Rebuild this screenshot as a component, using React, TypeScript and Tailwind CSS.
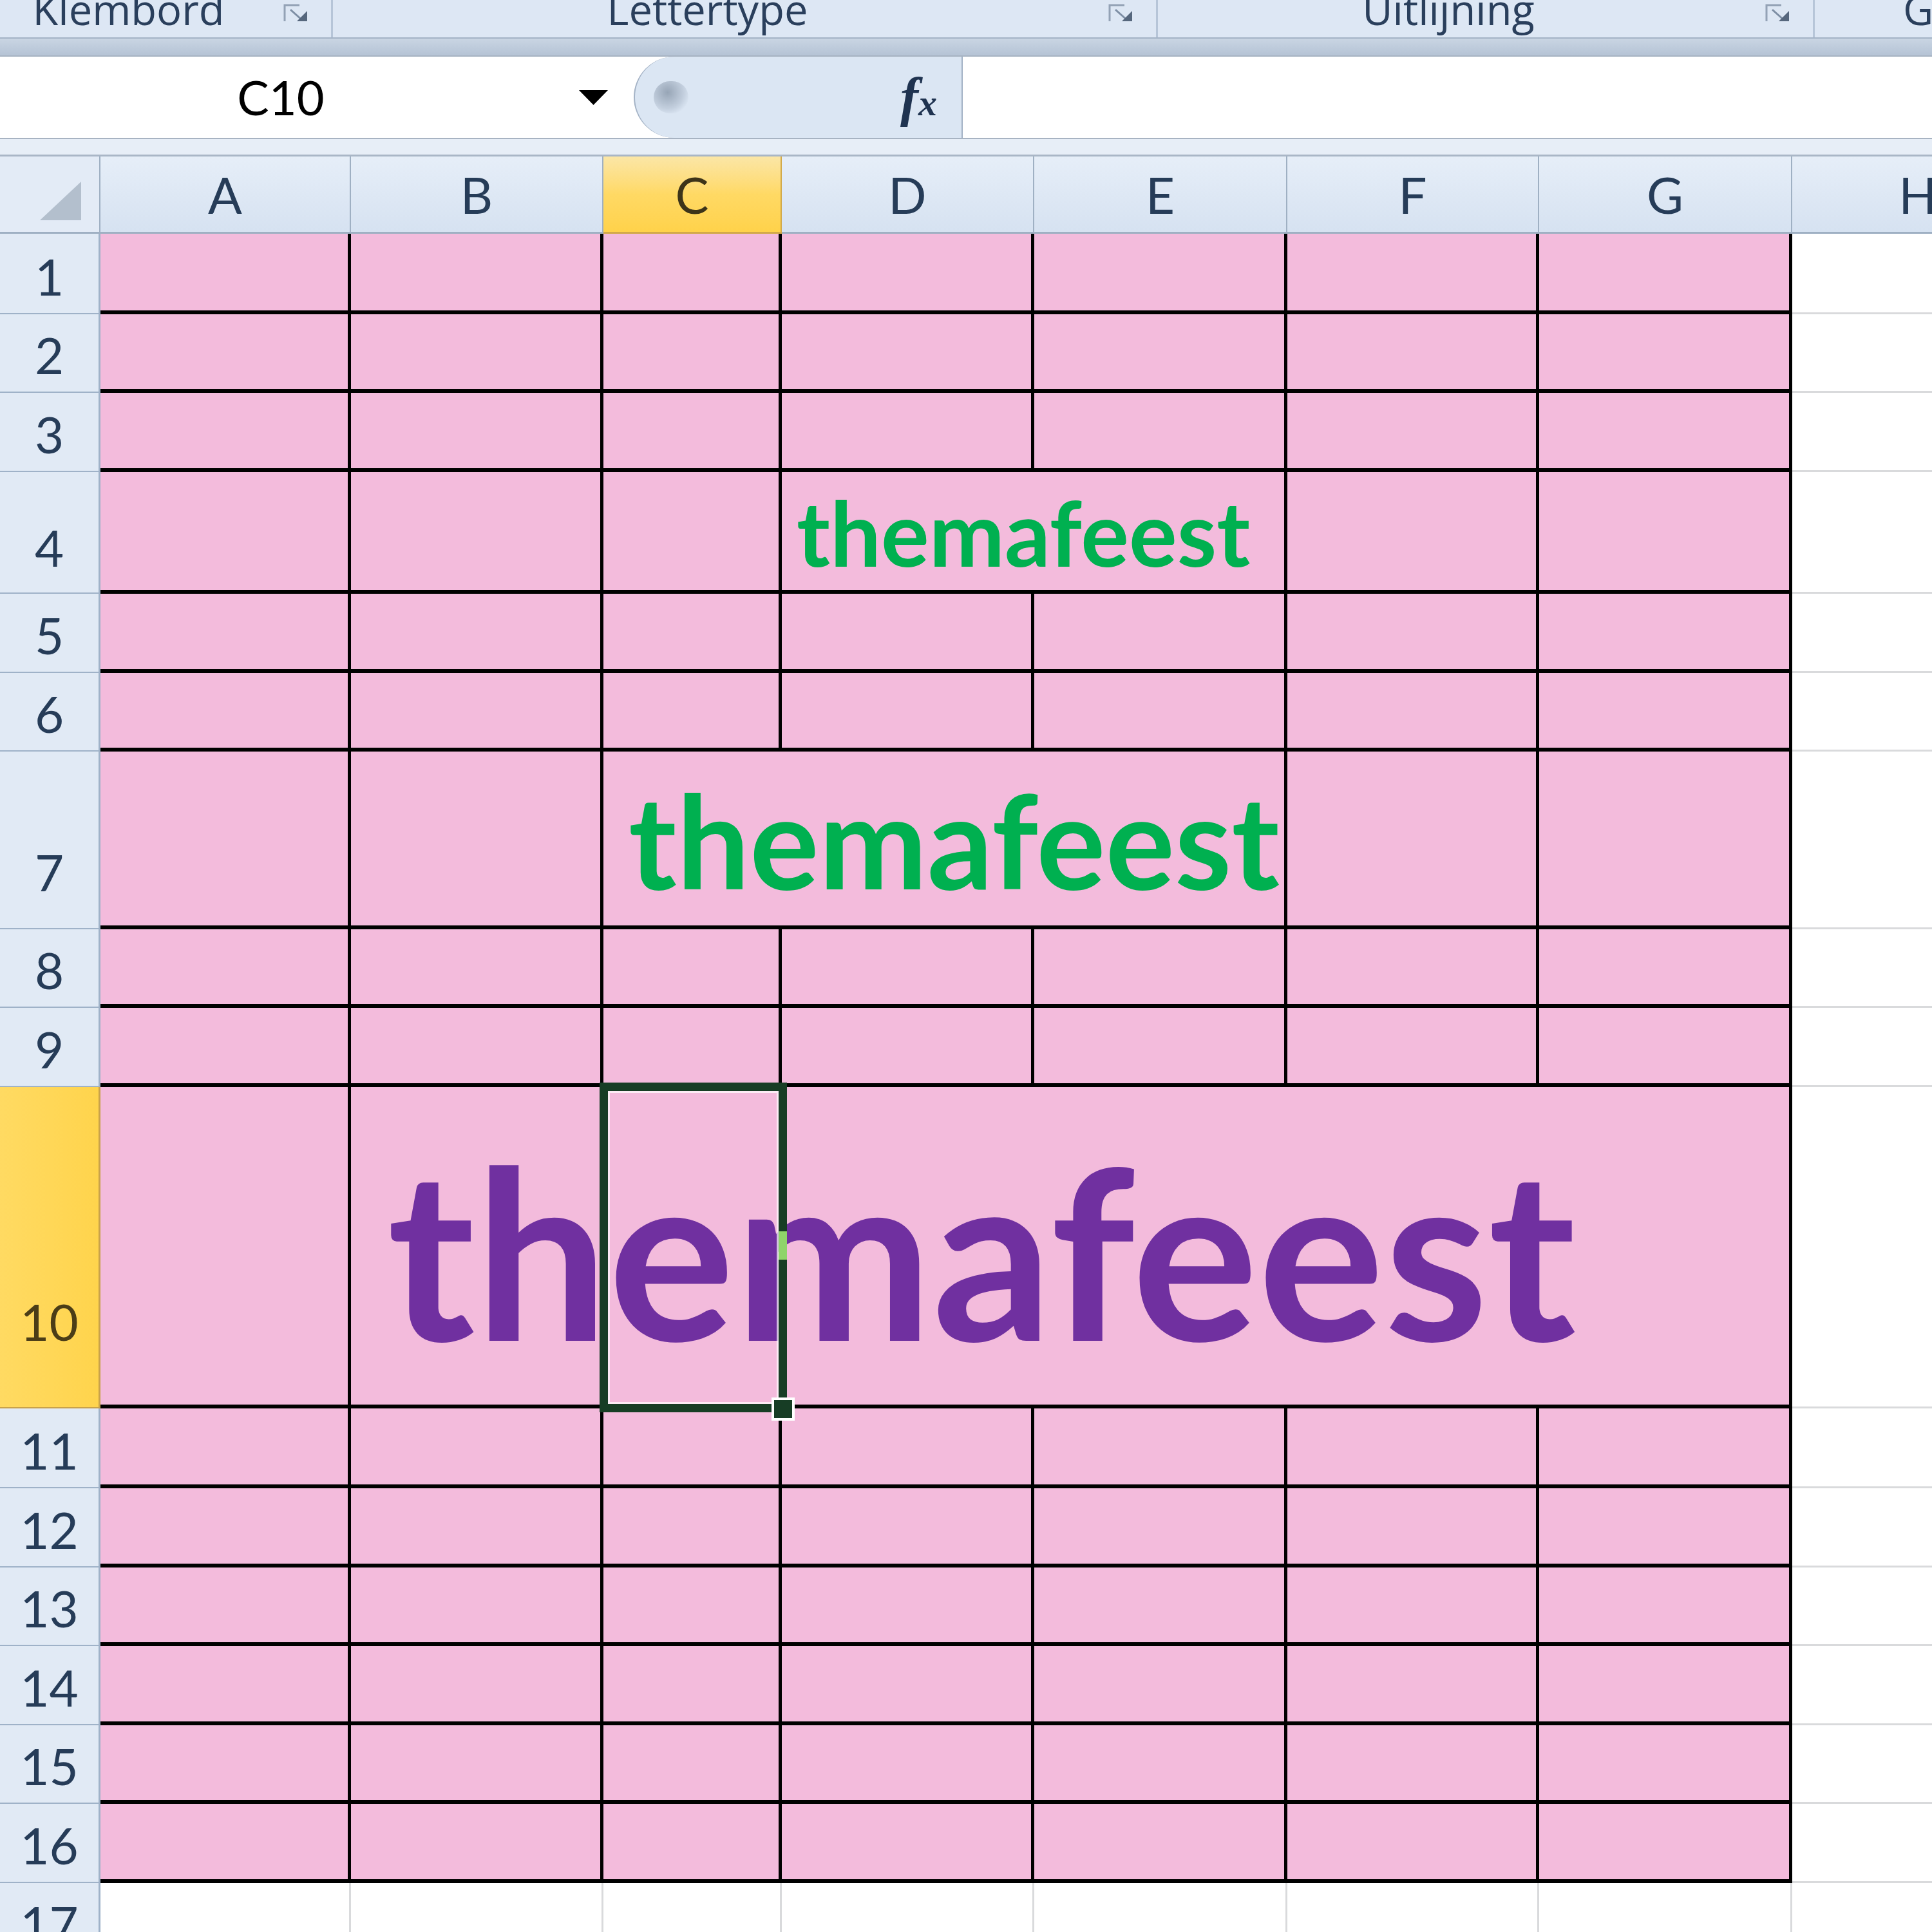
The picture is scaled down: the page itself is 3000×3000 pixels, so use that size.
import React from "react";

type Seg = { span: number; text?: "sm" | "md" | "lg" };

const COLS = ["A", "B", "C", "D", "E", "F", "G", "H"];

const SPAN: Record<number, string> = { 1: "", 2: "col-span-2", 3: "col-span-3", 6: "col-span-6" };

const LABEL_PAD: Record<number, string> = { 4: "pb-[31px]", 7: "pb-[48px]", 10: "pb-[94px]" };

const seven: Seg[] = Array.from({ length: 7 }, () => ({ span: 1 }));

function rowSegs(n: number): Seg[] {
  if (n === 4) return [{ span: 1 }, { span: 1 }, { span: 1 }, { span: 2, text: "sm" }, { span: 1 }, { span: 1 }];
  if (n === 7) return [{ span: 1 }, { span: 1 }, { span: 3, text: "md" }, { span: 1 }, { span: 1 }];
  if (n === 10) return [{ span: 1 }, { span: 6, text: "lg" }];
  return seven;
}

function Launcher() {
  return (
    <svg width="41" height="30" viewBox="0 0 41 30">
      <path d="M3 28 V3 H26" fill="none" stroke="#93a2b5" strokeWidth="3" />
      <path d="M12 10 L30 26" stroke="#7d8ea4" strokeWidth="3" />
      <polygon points="22,28 38,28 38,12" fill="#56677d" />
    </svg>
  );
}

function RibbonGroup({ label, w, last }: { label: string; w: string; last?: boolean }) {
  return (
    <div className={`${w} shrink-0 flex items-end border-r-[3px] border-[#b6c5d8]`}>
      {last ? (
        <div className="pl-[137px] pb-[12px] leading-[64px] whitespace-nowrap">{label}</div>
      ) : (
        <>
          <div className="flex-1 text-center pb-[12px] leading-[64px] whitespace-nowrap">{label}</div>
          <div className="w-[115px] shrink-0 pl-[40px] pb-[23px] flex">
            <Launcher />
          </div>
        </>
      )}
    </div>
  );
}

function CellText({ kind }: { kind: "sm" | "md" | "lg" }) {
  if (kind === "sm")
    return <span className="text-[140px] text-[#00b050] pl-[23px] pb-[20px]">themafeest</span>;
  if (kind === "md")
    return <span className="text-[201px] text-[#00b050] pl-[39px] pb-[33px]">themafeest</span>;
  return <span className="text-[367px] text-[#7030a0] pl-[56px] pb-[57px]">themafeest</span>;
}

export default function App() {
  const rows = Array.from({ length: 17 }, (_, i) => i + 1);

  return (
    <div className="w-[3000px] h-[3000px] overflow-hidden bg-white flex flex-col font-['Lato',sans-serif]">
      {/* ribbon group labels */}
      <div className="h-[86px] flex flex-col shrink-0">
        <div className="h-[58px] flex bg-[#dde7f4] text-[65px] text-[#2a3f5c] font-['Open_Sans',sans-serif]">
          <RibbonGroup label="Klembord" w="w-[517px]" />
          <RibbonGroup label="Lettertype" w="w-[1281px]" />
          <RibbonGroup label="Uitlijning" w="w-[1020px]" />
          <RibbonGroup label="Getal" w="w-[400px]" last />
        </div>
        <div className="h-[28px] bg-gradient-to-b from-[#c9d5e3] to-[#b5c3d5] border-t-2 border-[#a4b3c6]" />
      </div>

      {/* formula bar */}
      <div className="h-[130px] shrink-0 flex border-y-2 border-[#a7b3c2] bg-white">
        <div className="w-[984px] shrink-0 flex items-center">
          <div className="w-[872px] text-center text-[74px] leading-none text-black">C10</div>
          <svg width="45" height="23" viewBox="0 0 45 23" className="ml-[27px]">
            <polygon points="0,0 45,0 22.5,23" fill="#000" />
          </svg>
        </div>
        <div className="w-[511px] shrink-0 flex items-center bg-[#dbe6f3] rounded-l-[64px] border-l-2 border-r-2 border-[#a3b2c5]">
          <div className="ml-[29px] w-[54px] h-[50px] rounded-full bg-[radial-gradient(circle_at_40%_35%,#97a5b6,#c3cfde_55%,#dbe6f3_78%)]" />
          <span className="ml-auto mr-[38px] font-['Liberation_Serif',serif] italic font-bold text-[84px] leading-none text-[#1f3350]">
            f<span className="text-[58px]">x</span>
          </span>
        </div>
        <div className="flex-1 bg-white" />
      </div>
      <div className="h-[27px] shrink-0 bg-[#e7eef7] border-b-[3px] border-[#a9b6c6]" />

      {/* sheet */}
      <div className="relative">
        <div className="grid grid-cols-[156px_389px_392px_277px_392px_393px_391px_393px_392px] grid-rows-[120px_125px_122px_123px_189px_123px_122px_276px_122px_123px_499px_124px_123px_122px_123px_122px_123px_122px] text-[#263c58]">
          {/* header row */}
          <div className="bg-[#e3ebf6] border-r-2 border-b-[3px] border-[#9fb0c3] flex items-end justify-end pr-[28px] pb-[18px]">
            <svg width="64" height="60" viewBox="0 0 64 60">
              <polygon points="64,0 64,60 0,60" fill="#b3bfcd" />
            </svg>
          </div>
          {COLS.map((c) => (
            <div
              key={c}
              className={
                c === "C"
                  ? "bg-gradient-to-b from-[#fbe6a6] via-[#ffd964] to-[#ffd24a] border-r-2 border-b-[3px] border-[#d2a94a] flex items-center justify-center text-[78px] leading-none text-[#3d3419]"
                  : "bg-gradient-to-b from-[#e6eef8] to-[#d6e2f1] border-r-2 border-b-[3px] border-[#9fb0c3] flex items-center justify-center text-[78px] leading-none"
              }
            >
              {c}
            </div>
          ))}

          {rows.map((n) => (
            <React.Fragment key={n}>
              <div
                className={`${
                  n === 10
                    ? "bg-gradient-to-r from-[#ffda62] to-[#ffd44c] border-[#c9a249] text-[#4b3d17]"
                    : "bg-[#e1eaf5] border-[#9fb2c8]"
                } border-r-[3px] border-b-2 flex items-end justify-center text-[78px] leading-none ${
                  LABEL_PAD[n] ?? "pb-[18px]"
                }`}
              >
                {n}
              </div>
              {n === 17 ? (
                COLS.map((c) => (
                  <div key={c} className="bg-white border-r-[3px] border-b-[3px] border-[#d9dadc]" />
                ))
              ) : (
                <>
                  {rowSegs(n).map((s, i) => (
                    <div
                      key={i}
                      className={`${SPAN[s.span]} bg-[#f3bbdc] border-r-[5px] border-b-[6px] border-black flex items-end whitespace-nowrap leading-none font-bold`}
                    >
                      {s.text && <CellText kind={s.text} />}
                    </div>
                  ))}
                  <div className="bg-white border-r-[3px] border-b-[3px] border-[#d9dadc]" />
                </>
              )}
            </React.Fragment>
          ))}
        </div>

        {/* active cell C10 */}
        <div className="absolute left-[931px] top-[1438px] w-[291px] h-[512px] z-10 border-[13px] border-[#173d25]">
          <div className="w-full h-full border-[3px] border-white/70" />
          <div className="absolute right-[-13px] top-[218px] w-[13px] h-[44px] bg-[#8fd46a]" />
          <div className="absolute right-[-25px] bottom-[-26px] w-[36px] h-[36px] bg-[#173d25] border-[4px] border-white" />
        </div>
      </div>
    </div>
  );
}
